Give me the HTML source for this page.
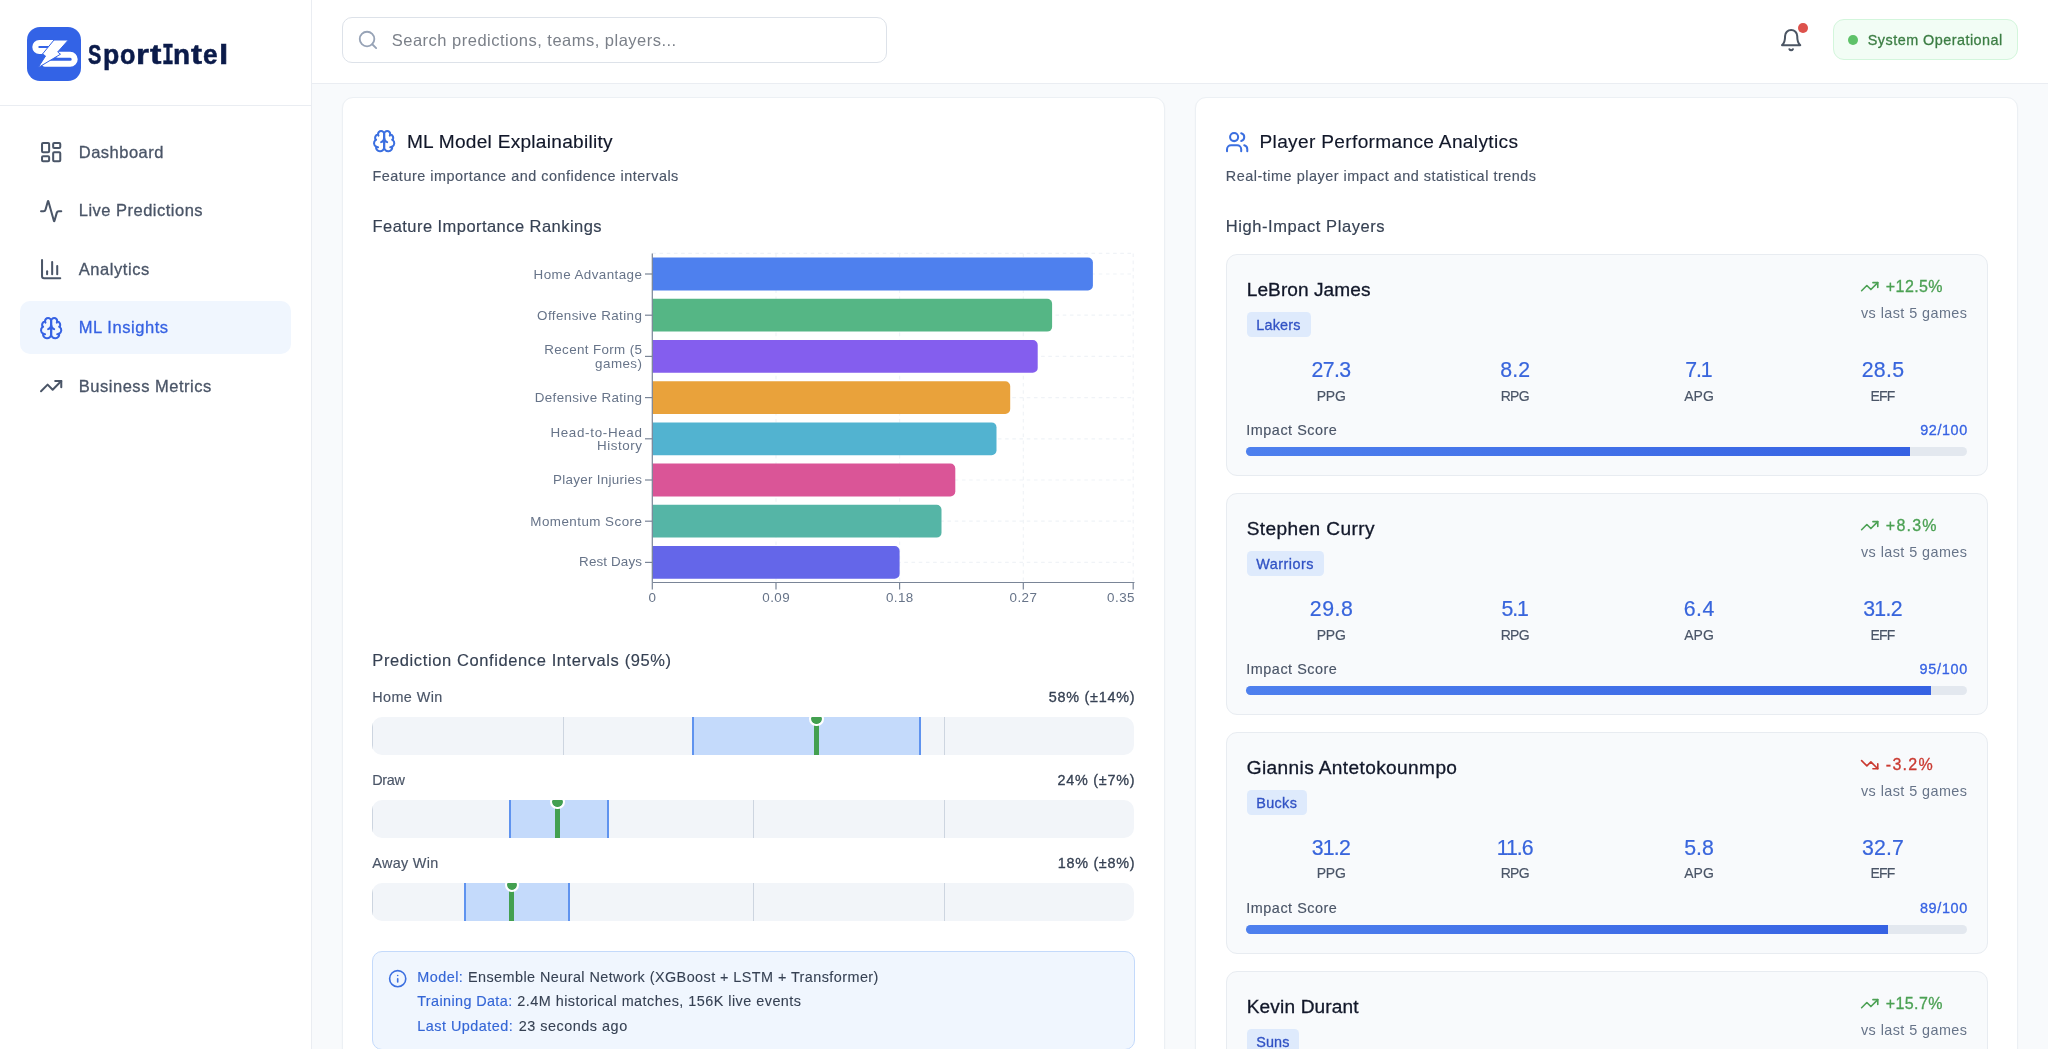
<!DOCTYPE html>
<html lang="en"><head><meta charset="utf-8"><title>SportIntel</title>
<style>
html,body{margin:0;padding:0;}
body{width:2048px;height:1049px;overflow:hidden;position:relative;font-family:"Liberation Sans",sans-serif;background:#f8fafc;}
#root{position:absolute;left:0;top:0;width:2048px;height:1049px;overflow:hidden;will-change:transform;}
.b{position:absolute;}
.t{position:absolute;white-space:nowrap;line-height:1;}
</style></head><body><div id="root">
<div class="b" style="left:0px;top:0px;width:2048px;height:1049px;background:#f8fafc;"></div>
<div class="b" style="left:0px;top:0px;width:311px;height:1049px;background:#fff;border-right:1px solid #eaedf2;"></div>
<div class="b" style="left:0px;top:104.5px;width:311px;height:1px;background:#eaedf2;"></div>
<div class="b" style="left:312px;top:0px;width:1736px;height:83px;background:#fff;border-bottom:1px solid #eaedf2;"></div>
<svg class="b" style="left:26.5px;top:26.5px" width="54" height="54" viewBox="0 0 54 54">
<rect width="54" height="54" rx="13" fill="#3363e6"/>
<path d="M34 16H12.3a4 4 0 0 0 0 8H24" fill="none" stroke="#fff" stroke-width="6" stroke-linecap="butt"/>
<path d="M31 27.7H43.2a4.5 4.5 0 0 1 0 9H18" fill="none" stroke="#fff" stroke-width="6" stroke-linecap="round"/>
<path d="M27 13H41.3L30.7 25l2.8 2.2L11 40.7 18.5 29l-3-2z" fill="#fff" stroke="#3363e6" stroke-width="1" stroke-linejoin="round"/>
</svg>
<div class="t" style="left:88.38px;top:39px;font-size:28px;line-height:31px;font-weight:bold;color:#0b1b4a;-webkit-text-stroke:0.55px #0b1b4a;transform-origin:0 25px;transform:scale(0.7149,1.0000);">S</div>
<div class="t" style="left:103.27px;top:39px;font-size:28px;line-height:31px;font-weight:bold;color:#0b1b4a;-webkit-text-stroke:0.55px #0b1b4a;transform-origin:0 25px;transform:scale(0.9505,1.0000);">p</div>
<div class="t" style="left:120.40px;top:39px;font-size:28px;line-height:31px;font-weight:bold;color:#0b1b4a;-webkit-text-stroke:0.55px #0b1b4a;transform-origin:0 25px;transform:scale(0.9007,1.0000);">o</div>
<div class="t" style="left:136.28px;top:39px;font-size:28px;line-height:31px;font-weight:bold;color:#0b1b4a;-webkit-text-stroke:0.55px #0b1b4a;transform-origin:0 25px;transform:scale(1.1878,1.0000);">r</div>
<div class="t" style="left:150.27px;top:39px;font-size:28px;line-height:31px;font-weight:bold;color:#0b1b4a;-webkit-text-stroke:0.55px #0b1b4a;transform-origin:0 25px;transform:scale(1.2253,1.0000);">t</div>
<div class="t" style="left:161.90px;top:41px;font-size:28px;line-height:31px;font-weight:bold;color:#0b1b4a;-webkit-text-stroke:0.55px #0b1b4a;font-family:'Liberation Mono',monospace;transform-origin:0 23px;transform:scale(0.7103,1.0646);">I</div>
<div class="t" style="left:173.11px;top:39px;font-size:28px;line-height:31px;font-weight:bold;color:#0b1b4a;-webkit-text-stroke:0.55px #0b1b4a;transform-origin:0 25px;transform:scale(0.9956,1.0000);">n</div>
<div class="t" style="left:191.47px;top:39px;font-size:28px;line-height:31px;font-weight:bold;color:#0b1b4a;-webkit-text-stroke:0.55px #0b1b4a;transform-origin:0 25px;transform:scale(1.1789,1.0000);">t</div>
<div class="t" style="left:203.17px;top:39px;font-size:28px;line-height:31px;font-weight:bold;color:#0b1b4a;-webkit-text-stroke:0.55px #0b1b4a;transform-origin:0 25px;transform:scale(0.9371,1.0000);">e</div>
<div class="t" style="left:218.66px;top:39px;font-size:28px;line-height:31px;font-weight:bold;color:#0b1b4a;-webkit-text-stroke:0.55px #0b1b4a;transform-origin:0 25px;transform:scale(1.1948,1.0000);">l</div>
<svg class="b" style="left:39.2px;top:140.04999999999998px;" width="24.3" height="24.3" viewBox="0 0 24 24" fill="none" stroke="#4a5567" stroke-width="2" stroke-linecap="round" stroke-linejoin="round"><rect width="7" height="9" x="3" y="3" rx="1"/><rect width="7" height="5" x="14" y="3" rx="1"/><rect width="7" height="9" x="14" y="12" rx="1"/><rect width="7" height="5" x="3" y="16" rx="1"/></svg>
<div class="t" style="left:78.80px;top:143.00px;font-size:16.5px;color:#4a5567;letter-spacing:0.485px;-webkit-text-stroke:0.3px #4a5567;line-height:18px;">Dashboard</div>
<svg class="b" style="left:39.2px;top:198.54999999999998px;" width="24.3" height="24.3" viewBox="0 0 24 24" fill="none" stroke="#4a5567" stroke-width="2" stroke-linecap="round" stroke-linejoin="round"><path d="M22 12h-2.48a2 2 0 0 0-1.93 1.46l-2.35 8.36a.25.25 0 0 1-.48 0L9.24 2.18a.25.25 0 0 0-.48 0l-2.35 8.36A2 2 0 0 1 4.49 12H2"/></svg>
<div class="t" style="left:78.80px;top:201.00px;font-size:16.5px;color:#4a5567;letter-spacing:0.485px;-webkit-text-stroke:0.3px #4a5567;line-height:18px;">Live Predictions</div>
<svg class="b" style="left:39.2px;top:257.05px;" width="24.3" height="24.3" viewBox="0 0 24 24" fill="none" stroke="#4a5567" stroke-width="2" stroke-linecap="round" stroke-linejoin="round"><path d="M3 3v16a2 2 0 0 0 2 2h16"/><path d="M18 17V9"/><path d="M13 17V5"/><path d="M8 17v-3"/></svg>
<div class="t" style="left:78.80px;top:260.00px;font-size:16.5px;color:#4a5567;letter-spacing:0.559px;-webkit-text-stroke:0.3px #4a5567;line-height:18px;">Analytics</div>
<div class="b" style="left:20px;top:301.45px;width:270.75px;height:52.5px;background:#f0f6fe;border-radius:10px;"></div>
<svg class="b" style="left:39.2px;top:315.55px;" width="24.3" height="24.3" viewBox="0 0 24 24" fill="none" stroke="#3662e3" stroke-width="2" stroke-linecap="round" stroke-linejoin="round"><path d="M12 5a3 3 0 1 0-5.997.125 4 4 0 0 0-2.526 5.77 4 4 0 0 0 .556 6.588A4 4 0 1 0 12 18Z"/><path d="M12 5a3 3 0 1 1 5.997.125 4 4 0 0 1 2.526 5.77 4 4 0 0 1-.556 6.588A4 4 0 1 1 12 18Z"/><path d="M15 13a4.5 4.5 0 0 1-3-4 4.5 4.5 0 0 1-3 4"/><path d="M17.599 6.5a3 3 0 0 0 .399-1.375"/><path d="M6.003 5.125A3 3 0 0 0 6.401 6.5"/><path d="M3.477 10.896a4 4 0 0 1 .585-.396"/><path d="M19.938 10.5a4 4 0 0 1 .585.396"/><path d="M6 18a4 4 0 0 1-1.967-.516"/><path d="M19.967 17.484A4 4 0 0 1 18 18"/></svg>
<div class="t" style="left:78.80px;top:318.00px;font-size:16.5px;color:#3662e3;letter-spacing:0.549px;-webkit-text-stroke:0.3px #3662e3;line-height:18px;">ML Insights</div>
<svg class="b" style="left:39.2px;top:374.05px;" width="24.3" height="24.3" viewBox="0 0 24 24" fill="none" stroke="#4a5567" stroke-width="2" stroke-linecap="round" stroke-linejoin="round"><polyline points="22 7 13.5 15.5 8.5 10.5 2 17"/><polyline points="16 7 22 7 22 13"/></svg>
<div class="t" style="left:78.80px;top:377.00px;font-size:16.5px;color:#4a5567;letter-spacing:0.520px;-webkit-text-stroke:0.3px #4a5567;line-height:18px;">Business Metrics</div>
<div class="b" style="left:342px;top:17px;width:545px;height:46px;background:#fff;border:1px solid #dde2e9;border-radius:10px;box-sizing:border-box;"></div>
<svg class="b" style="left:356.5px;top:28.6px;" width="21.9" height="21.9" viewBox="0 0 24 24" fill="none" stroke="#97a3b6" stroke-width="2" stroke-linecap="round" stroke-linejoin="round"><circle cx="11" cy="11" r="8"/><path d="m21 21-4.3-4.3"/></svg>
<div class="t" style="left:391.80px;top:31.00px;font-size:16.5px;color:#7b8089;letter-spacing:0.487px;line-height:18px;">Search predictions, teams, players...</div>
<svg class="b" style="left:1778.8px;top:27.8px;" width="24.3" height="24.3" viewBox="0 0 24 24" fill="none" stroke="#4b5563" stroke-width="2" stroke-linecap="round" stroke-linejoin="round"><path d="M6 8a6 6 0 0 1 12 0c0 7 3 9 3 9H3s3-2 3-9"/><path d="M10.3 21a1.94 1.94 0 0 0 3.4 0"/></svg>
<div class="b" style="left:1798.2px;top:22.9px;width:9.8px;height:9.8px;background:#dd524c;border-radius:50%;"></div>
<div class="b" style="left:1832.5px;top:19.4px;width:185.7px;height:40.7px;background:#f2fdf5;border:1px solid #d3f6dc;border-radius:11px;box-sizing:border-box;"></div>
<div class="b" style="left:1848.1px;top:35.2px;width:9.8px;height:9.8px;background:#5ec269;border-radius:50%;"></div>
<div class="t" style="left:1867.80px;top:32.00px;font-size:14.4px;color:#3c7e44;letter-spacing:0.473px;-webkit-text-stroke:0.3px #3c7e44;line-height:16px;">System Operational</div>
<div class="b" style="left:342px;top:96.5px;width:823px;height:1000px;background:#fff;border:1px solid #ecf0f4;border-radius:11px;box-sizing:border-box;box-shadow:0 1px 2px rgba(15,23,42,0.03);"></div>
<svg class="b" style="left:371.9px;top:128.9px;" width="24.3" height="24.3" viewBox="0 0 24 24" fill="none" stroke="#3b6fe0" stroke-width="2" stroke-linecap="round" stroke-linejoin="round"><path d="M12 5a3 3 0 1 0-5.997.125 4 4 0 0 0-2.526 5.77 4 4 0 0 0 .556 6.588A4 4 0 1 0 12 18Z"/><path d="M12 5a3 3 0 1 1 5.997.125 4 4 0 0 1 2.526 5.77 4 4 0 0 1-.556 6.588A4 4 0 1 1 12 18Z"/><path d="M15 13a4.5 4.5 0 0 1-3-4 4.5 4.5 0 0 1-3 4"/><path d="M17.599 6.5a3 3 0 0 0 .399-1.375"/><path d="M6.003 5.125A3 3 0 0 0 6.401 6.5"/><path d="M3.477 10.896a4 4 0 0 1 .585-.396"/><path d="M19.938 10.5a4 4 0 0 1 .585.396"/><path d="M6 18a4 4 0 0 1-1.967-.516"/><path d="M19.967 17.484A4 4 0 0 1 18 18"/></svg>
<div class="t" style="left:406.90px;top:131.00px;font-size:19.1px;color:#111729;letter-spacing:0.262px;-webkit-text-stroke:0.15px #111729;line-height:21px;">ML Model Explainability</div>
<div class="t" style="left:372.50px;top:168.00px;font-size:14.4px;color:#4a5567;letter-spacing:0.520px;-webkit-text-stroke:0.15px #4a5567;line-height:16px;">Feature importance and confidence intervals</div>
<div class="t" style="left:372.50px;top:217.00px;font-size:16.5px;color:#364153;letter-spacing:0.448px;-webkit-text-stroke:0.15px #364153;line-height:18px;">Feature Importance Rankings</div>
<svg class="b" style="left:0;top:0" width="2048" height="1049" viewBox="0 0 2048 1049"><line x1="652.3" y1="274.0" x2="1134.5" y2="274.0" stroke="#f0f3f7" stroke-width="1.2" stroke-dasharray="3.6 3.6"/><line x1="652.3" y1="315.2" x2="1134.5" y2="315.2" stroke="#f0f3f7" stroke-width="1.2" stroke-dasharray="3.6 3.6"/><line x1="652.3" y1="356.4" x2="1134.5" y2="356.4" stroke="#f0f3f7" stroke-width="1.2" stroke-dasharray="3.6 3.6"/><line x1="652.3" y1="397.6" x2="1134.5" y2="397.6" stroke="#f0f3f7" stroke-width="1.2" stroke-dasharray="3.6 3.6"/><line x1="652.3" y1="438.8" x2="1134.5" y2="438.8" stroke="#f0f3f7" stroke-width="1.2" stroke-dasharray="3.6 3.6"/><line x1="652.3" y1="480.0" x2="1134.5" y2="480.0" stroke="#f0f3f7" stroke-width="1.2" stroke-dasharray="3.6 3.6"/><line x1="652.3" y1="521.2" x2="1134.5" y2="521.2" stroke="#f0f3f7" stroke-width="1.2" stroke-dasharray="3.6 3.6"/><line x1="652.3" y1="562.4" x2="1134.5" y2="562.4" stroke="#f0f3f7" stroke-width="1.2" stroke-dasharray="3.6 3.6"/><line x1="652.3" y1="253.4" x2="1134.5" y2="253.4" stroke="#f0f3f7" stroke-width="1.2" stroke-dasharray="3.6 3.6"/><line x1="652.3" y1="253.4" x2="652.3" y2="582.5" stroke="#f0f3f7" stroke-width="1.2" stroke-dasharray="3.6 3.6"/><line x1="776.0" y1="253.4" x2="776.0" y2="582.5" stroke="#f0f3f7" stroke-width="1.2" stroke-dasharray="3.6 3.6"/><line x1="899.6" y1="253.4" x2="899.6" y2="582.5" stroke="#f0f3f7" stroke-width="1.2" stroke-dasharray="3.6 3.6"/><line x1="1023.3" y1="253.4" x2="1023.3" y2="582.5" stroke="#f0f3f7" stroke-width="1.2" stroke-dasharray="3.6 3.6"/><line x1="1133.2" y1="253.4" x2="1133.2" y2="582.5" stroke="#f0f3f7" stroke-width="1.2" stroke-dasharray="3.6 3.6"/><path d="M652.3,257.6h435.7a4.9,4.9 0 0 1 4.9,4.9v23.0a4.9,4.9 0 0 1 -4.9,4.9h-435.7z" fill="#4e80ee"/><line x1="645.0" y1="274.0" x2="652.3" y2="274.0" stroke="#7a8597" stroke-width="1.2"/><path d="M652.3,298.8h394.9a4.9,4.9 0 0 1 4.9,4.9v23.0a4.9,4.9 0 0 1 -4.9,4.9h-394.9z" fill="#55b685"/><line x1="645.0" y1="315.2" x2="652.3" y2="315.2" stroke="#7a8597" stroke-width="1.2"/><path d="M652.3,340.0h380.5a4.9,4.9 0 0 1 4.9,4.9v23.0a4.9,4.9 0 0 1 -4.9,4.9h-380.5z" fill="#845eee"/><line x1="645.0" y1="356.4" x2="652.3" y2="356.4" stroke="#7a8597" stroke-width="1.2"/><path d="M652.3,381.2h353.0a4.9,4.9 0 0 1 4.9,4.9v23.0a4.9,4.9 0 0 1 -4.9,4.9h-353.0z" fill="#e9a23b"/><line x1="645.0" y1="397.6" x2="652.3" y2="397.6" stroke="#7a8597" stroke-width="1.2"/><path d="M652.3,422.4h339.3a4.9,4.9 0 0 1 4.9,4.9v23.0a4.9,4.9 0 0 1 -4.9,4.9h-339.3z" fill="#52b3d0"/><line x1="645.0" y1="438.8" x2="652.3" y2="438.8" stroke="#7a8597" stroke-width="1.2"/><path d="M652.3,463.6h298.1a4.9,4.9 0 0 1 4.9,4.9v23.0a4.9,4.9 0 0 1 -4.9,4.9h-298.1z" fill="#da5597"/><line x1="645.0" y1="480.0" x2="652.3" y2="480.0" stroke="#7a8597" stroke-width="1.2"/><path d="M652.3,504.8h284.3a4.9,4.9 0 0 1 4.9,4.9v23.0a4.9,4.9 0 0 1 -4.9,4.9h-284.3z" fill="#55b5a6"/><line x1="645.0" y1="521.2" x2="652.3" y2="521.2" stroke="#7a8597" stroke-width="1.2"/><path d="M652.3,546.0h242.4a4.9,4.9 0 0 1 4.9,4.9v23.0a4.9,4.9 0 0 1 -4.9,4.9h-242.4z" fill="#6466e9"/><line x1="645.0" y1="562.4" x2="652.3" y2="562.4" stroke="#7a8597" stroke-width="1.2"/><line x1="652.3" y1="253.4" x2="652.3" y2="582.5" stroke="#7a8597" stroke-width="1.2"/><line x1="652.3" y1="582.5" x2="1134.5" y2="582.5" stroke="#7a8597" stroke-width="1.2"/><line x1="652.3" y1="582.5" x2="652.3" y2="589.5" stroke="#7a8597" stroke-width="1.2"/><line x1="776.0" y1="582.5" x2="776.0" y2="589.5" stroke="#7a8597" stroke-width="1.2"/><line x1="899.6" y1="582.5" x2="899.6" y2="589.5" stroke="#7a8597" stroke-width="1.2"/><line x1="1023.3" y1="582.5" x2="1023.3" y2="589.5" stroke="#7a8597" stroke-width="1.2"/><line x1="1133.2" y1="582.5" x2="1133.2" y2="589.5" stroke="#7a8597" stroke-width="1.2"/></svg>
<div class="t" style="left:533.60px;top:267.00px;font-size:13.4px;color:#677489;letter-spacing:0.430px;line-height:15px;">Home Advantage</div>
<div class="t" style="left:537.10px;top:308.00px;font-size:13.4px;color:#677489;letter-spacing:0.405px;line-height:15px;">Offensive Rating</div>
<div class="t" style="left:544.30px;top:342.00px;font-size:13.4px;color:#677489;letter-spacing:0.355px;line-height:15px;">Recent Form (5</div>
<div class="t" style="left:595.10px;top:356.00px;font-size:13.4px;color:#677489;letter-spacing:0.444px;line-height:15px;">games)</div>
<div class="t" style="left:534.80px;top:390.00px;font-size:13.4px;color:#677489;letter-spacing:0.344px;line-height:15px;">Defensive Rating</div>
<div class="t" style="left:550.40px;top:425.00px;font-size:13.4px;color:#677489;letter-spacing:0.676px;line-height:15px;">Head-to-Head</div>
<div class="t" style="left:597.10px;top:438.00px;font-size:13.4px;color:#677489;letter-spacing:0.535px;line-height:15px;">History</div>
<div class="t" style="left:553.10px;top:472.00px;font-size:13.4px;color:#677489;letter-spacing:0.286px;line-height:15px;">Player Injuries</div>
<div class="t" style="left:530.30px;top:514.00px;font-size:13.4px;color:#677489;letter-spacing:0.458px;line-height:15px;">Momentum Score</div>
<div class="t" style="left:579.10px;top:554.00px;font-size:13.4px;color:#677489;letter-spacing:0.137px;line-height:15px;">Rest Days</div>
<div class="t" style="left:648.57px;top:590.00px;font-size:13.4px;color:#677489;letter-spacing:0.450px;line-height:15px;">0</div>
<div class="t" style="left:762.24px;top:590.00px;font-size:13.4px;color:#677489;letter-spacing:0.450px;line-height:15px;">0.09</div>
<div class="t" style="left:885.90px;top:590.00px;font-size:13.4px;color:#677489;letter-spacing:0.450px;line-height:15px;">0.18</div>
<div class="t" style="left:1009.56px;top:590.00px;font-size:13.4px;color:#677489;letter-spacing:0.450px;line-height:15px;">0.27</div>
<div class="t" style="left:1107.07px;top:590.00px;font-size:13.4px;color:#677489;letter-spacing:0.450px;line-height:15px;">0.35</div>
<div class="t" style="left:372.30px;top:651.00px;font-size:16.5px;color:#364153;letter-spacing:0.606px;-webkit-text-stroke:0.15px #364153;line-height:18px;">Prediction Confidence Intervals (95%)</div>
<div class="t" style="left:372.30px;top:689.00px;font-size:14.4px;color:#4a5567;letter-spacing:0.398px;-webkit-text-stroke:0.15px #4a5567;line-height:16px;">Home Win</div>
<div class="t" style="left:1048.80px;top:689.00px;font-size:14.4px;color:#364153;letter-spacing:0.729px;-webkit-text-stroke:0.3px #364153;line-height:16px;">58% (±14%)</div>
<div class="b" style="left:372.3px;top:716.5px;width:762.0px;height:38.8px;background:#f2f5f9;border-radius:10px;overflow:hidden;">
<div class="b" style="left:0%;top:0;width:1.2px;height:100%;background:#cdd5e0;"></div>
<div class="b" style="left:25%;top:0;width:1.2px;height:100%;background:#cdd5e0;"></div>
<div class="b" style="left:50%;top:0;width:1.2px;height:100%;background:#cdd5e0;"></div>
<div class="b" style="left:75%;top:0;width:1.2px;height:100%;background:#cdd5e0;"></div>
<div class="b" style="left:42%;top:0;width:30%;height:100%;background:#c4dafb;border-left:2.4px solid #5f93ef;border-right:2.4px solid #5f93ef;box-sizing:border-box;"></div>
<div class="b" style="left:58%;top:0;width:4.86px;height:100%;background:#43a050;"></div>
<div class="b" style="left:calc(58% - 4.86px);top:-4.86px;width:14.6px;height:14.6px;background:#43a050;background-clip:padding-box;border:2.4px solid #fff;border-radius:50%;box-sizing:border-box;"></div>
</div>
<div class="t" style="left:372.30px;top:772.00px;font-size:14.4px;color:#4a5567;letter-spacing:-0.368px;-webkit-text-stroke:0.15px #4a5567;line-height:16px;">Draw</div>
<div class="t" style="left:1057.50px;top:772.00px;font-size:14.4px;color:#364153;letter-spacing:0.734px;-webkit-text-stroke:0.3px #364153;line-height:16px;">24% (±7%)</div>
<div class="b" style="left:372.3px;top:799.5px;width:762.0px;height:38.8px;background:#f2f5f9;border-radius:10px;overflow:hidden;">
<div class="b" style="left:0%;top:0;width:1.2px;height:100%;background:#cdd5e0;"></div>
<div class="b" style="left:25%;top:0;width:1.2px;height:100%;background:#cdd5e0;"></div>
<div class="b" style="left:50%;top:0;width:1.2px;height:100%;background:#cdd5e0;"></div>
<div class="b" style="left:75%;top:0;width:1.2px;height:100%;background:#cdd5e0;"></div>
<div class="b" style="left:18%;top:0;width:13%;height:100%;background:#c4dafb;border-left:2.4px solid #5f93ef;border-right:2.4px solid #5f93ef;box-sizing:border-box;"></div>
<div class="b" style="left:24%;top:0;width:4.86px;height:100%;background:#43a050;"></div>
<div class="b" style="left:calc(24% - 4.86px);top:-4.86px;width:14.6px;height:14.6px;background:#43a050;background-clip:padding-box;border:2.4px solid #fff;border-radius:50%;box-sizing:border-box;"></div>
</div>
<div class="t" style="left:372.30px;top:855.00px;font-size:14.4px;color:#4a5567;letter-spacing:0.321px;-webkit-text-stroke:0.15px #4a5567;line-height:16px;">Away Win</div>
<div class="t" style="left:1057.80px;top:855.00px;font-size:14.4px;color:#364153;letter-spacing:0.696px;-webkit-text-stroke:0.3px #364153;line-height:16px;">18% (±8%)</div>
<div class="b" style="left:372.3px;top:882.5px;width:762.0px;height:38.8px;background:#f2f5f9;border-radius:10px;overflow:hidden;">
<div class="b" style="left:0%;top:0;width:1.2px;height:100%;background:#cdd5e0;"></div>
<div class="b" style="left:25%;top:0;width:1.2px;height:100%;background:#cdd5e0;"></div>
<div class="b" style="left:50%;top:0;width:1.2px;height:100%;background:#cdd5e0;"></div>
<div class="b" style="left:75%;top:0;width:1.2px;height:100%;background:#cdd5e0;"></div>
<div class="b" style="left:12%;top:0;width:14%;height:100%;background:#c4dafb;border-left:2.4px solid #5f93ef;border-right:2.4px solid #5f93ef;box-sizing:border-box;"></div>
<div class="b" style="left:18%;top:0;width:4.86px;height:100%;background:#43a050;"></div>
<div class="b" style="left:calc(18% - 4.86px);top:-4.86px;width:14.6px;height:14.6px;background:#43a050;background-clip:padding-box;border:2.4px solid #fff;border-radius:50%;box-sizing:border-box;"></div>
</div>
<div class="b" style="left:372px;top:950.5px;width:763px;height:99.6px;background:#f0f6fe;border:1px solid #c4dafb;border-radius:10px;box-sizing:border-box;"></div>
<svg class="b" style="left:387.7px;top:968.6px;" width="19.4" height="19.4" viewBox="0 0 24 24" fill="none" stroke="#3b6fe0" stroke-width="2" stroke-linecap="round" stroke-linejoin="round"><circle cx="12" cy="12" r="10"/><path d="M12 16v-4"/><path d="M12 8h.01"/></svg>
<div class="t" style="left:417.20px;top:969.00px;font-size:14.4px;color:#3466d6;letter-spacing:0.496px;-webkit-text-stroke:0.15px #3466d6;line-height:16px;">Model:</div>
<div class="t" style="left:468.00px;top:969.00px;font-size:14.4px;color:#364153;letter-spacing:0.439px;-webkit-text-stroke:0.1px #364153;line-height:16px;">Ensemble Neural Network (XGBoost + LSTM + Transformer)</div>
<div class="t" style="left:417.20px;top:993.00px;font-size:14.4px;color:#3466d6;letter-spacing:0.392px;-webkit-text-stroke:0.15px #3466d6;line-height:16px;">Training Data:</div>
<div class="t" style="left:517.30px;top:993.00px;font-size:14.4px;color:#364153;letter-spacing:0.474px;-webkit-text-stroke:0.1px #364153;line-height:16px;">2.4M historical matches, 156K live events</div>
<div class="t" style="left:417.20px;top:1018.00px;font-size:14.4px;color:#3466d6;letter-spacing:0.503px;-webkit-text-stroke:0.15px #3466d6;line-height:16px;">Last Updated:</div>
<div class="t" style="left:518.80px;top:1018.00px;font-size:14.4px;color:#364153;letter-spacing:0.517px;-webkit-text-stroke:0.1px #364153;line-height:16px;">23 seconds ago</div>
<div class="b" style="left:1195px;top:96.5px;width:823px;height:1000px;background:#fff;border:1px solid #ecf0f4;border-radius:11px;box-sizing:border-box;box-shadow:0 1px 2px rgba(15,23,42,0.03);"></div>
<svg class="b" style="left:1225.2px;top:129.5px;" width="24.3" height="24.3" viewBox="0 0 24 24" fill="none" stroke="#3b6fe0" stroke-width="2" stroke-linecap="round" stroke-linejoin="round"><path d="M16 21v-2a4 4 0 0 0-4-4H6a4 4 0 0 0-4 4v2"/><circle cx="9" cy="7" r="4"/><path d="M22 21v-2a4 4 0 0 0-3-3.87"/><path d="M16 3.13a4 4 0 0 1 0 7.75"/></svg>
<div class="t" style="left:1259.50px;top:131.00px;font-size:19.1px;color:#111729;letter-spacing:0.335px;-webkit-text-stroke:0.15px #111729;line-height:21px;">Player Performance Analytics</div>
<div class="t" style="left:1225.75px;top:168.00px;font-size:14.4px;color:#4a5567;letter-spacing:0.533px;-webkit-text-stroke:0.15px #4a5567;line-height:16px;">Real-time player impact and statistical trends</div>
<div class="t" style="left:1225.75px;top:217.00px;font-size:16.5px;color:#364153;letter-spacing:0.567px;-webkit-text-stroke:0.15px #364153;line-height:18px;">High-Impact Players</div>
<div class="b" style="left:1226px;top:253.8px;width:761.5px;height:222.5px;background:#f8fafc;border:1px solid #e8ecf1;border-radius:11px;box-sizing:border-box;"></div>
<div class="t" style="left:1246.75px;top:279.00px;font-size:19.1px;color:#111729;letter-spacing:0.054px;-webkit-text-stroke:0.3px #111729;line-height:21px;">LeBron James</div>
<div class="b" style="left:1246.8px;top:311.9px;width:63.85px;height:25.3px;background:#deeafc;border-radius:4.5px;"></div>
<div class="t" style="left:1256.25px;top:317.00px;font-size:14.4px;color:#3152c4;letter-spacing:0.206px;-webkit-text-stroke:0.3px #3152c4;line-height:16px;">Lakers</div>
<svg class="b" style="left:1860.2px;top:276.9px;" width="19.4" height="19.4" viewBox="0 0 24 24" fill="none" stroke="#4ca154" stroke-width="2" stroke-linecap="round" stroke-linejoin="round"><polyline points="22 7 13.5 15.5 8.5 10.5 2 17"/><polyline points="16 7 22 7 22 13"/></svg>
<div class="t" style="left:1885.80px;top:278.00px;font-size:16px;color:#4ca154;letter-spacing:0.418px;-webkit-text-stroke:0.3px #4ca154;line-height:17px;">+12.5%</div>
<div class="t" style="left:1861.00px;top:305.00px;font-size:14.4px;color:#677489;letter-spacing:0.426px;line-height:16px;">vs last 5 games</div>
<div class="t" style="left:1311.40px;top:358.00px;font-size:21.3px;color:#3865dc;letter-spacing:-0.552px;-webkit-text-stroke:0.2px #3865dc;line-height:24px;">27.3</div>
<div class="t" style="left:1316.80px;top:388.00px;font-size:14px;color:#4a5567;letter-spacing:-0.283px;-webkit-text-stroke:0.15px #4a5567;line-height:16px;">PPG</div>
<div class="t" style="left:1500.30px;top:358.00px;font-size:21.3px;color:#3865dc;letter-spacing:0.045px;-webkit-text-stroke:0.2px #3865dc;line-height:24px;">8.2</div>
<div class="t" style="left:1500.65px;top:388.00px;font-size:14px;color:#4a5567;letter-spacing:-0.669px;-webkit-text-stroke:0.15px #4a5567;line-height:16px;">RPG</div>
<div class="t" style="left:1685.30px;top:358.00px;font-size:21.3px;color:#3865dc;letter-spacing:-1.100px;-webkit-text-stroke:0.2px #3865dc;line-height:24px;">7.1</div>
<div class="t" style="left:1684.20px;top:388.00px;font-size:14px;color:#4a5567;letter-spacing:0.017px;-webkit-text-stroke:0.15px #4a5567;line-height:16px;">APG</div>
<div class="t" style="left:1861.65px;top:358.00px;font-size:21.3px;color:#3865dc;letter-spacing:0.315px;-webkit-text-stroke:0.2px #3865dc;line-height:24px;">28.5</div>
<div class="t" style="left:1870.45px;top:388.00px;font-size:14px;color:#4a5567;letter-spacing:-0.821px;-webkit-text-stroke:0.15px #4a5567;line-height:16px;">EFF</div>
<div class="t" style="left:1246.30px;top:422.00px;font-size:14.4px;color:#4a5567;letter-spacing:0.524px;-webkit-text-stroke:0.15px #4a5567;line-height:16px;">Impact Score</div>
<div class="t" style="left:1920.25px;top:422.00px;font-size:14.4px;color:#3662e3;letter-spacing:0.591px;-webkit-text-stroke:0.3px #3662e3;line-height:16px;">92/100</div>
<div class="b" style="left:1246.1px;top:446.7px;width:721.2px;height:9.7px;background:#e3e8ef;border-radius:5px;"></div>
<div class="b" style="left:1246.1px;top:446.7px;width:663.5040000000001px;height:9.7px;background:linear-gradient(90deg,#4e80ee,#3662e3);border-radius:5px 0 0 5px;"></div>
<div class="b" style="left:1226px;top:492.75px;width:761.5px;height:222.5px;background:#f8fafc;border:1px solid #e8ecf1;border-radius:11px;box-sizing:border-box;"></div>
<div class="t" style="left:1246.75px;top:518.00px;font-size:19.1px;color:#111729;letter-spacing:0.387px;-webkit-text-stroke:0.3px #111729;line-height:21px;">Stephen Curry</div>
<div class="b" style="left:1246.8px;top:550.8499999999999px;width:76.80000000000001px;height:25.3px;background:#deeafc;border-radius:4.5px;"></div>
<div class="t" style="left:1256.25px;top:556.00px;font-size:14.4px;color:#3152c4;letter-spacing:0.477px;-webkit-text-stroke:0.3px #3152c4;line-height:16px;">Warriors</div>
<svg class="b" style="left:1860.2px;top:515.8499999999999px;" width="19.4" height="19.4" viewBox="0 0 24 24" fill="none" stroke="#4ca154" stroke-width="2" stroke-linecap="round" stroke-linejoin="round"><polyline points="22 7 13.5 15.5 8.5 10.5 2 17"/><polyline points="16 7 22 7 22 13"/></svg>
<div class="t" style="left:1885.80px;top:517.00px;font-size:16px;color:#4ca154;letter-spacing:1.247px;-webkit-text-stroke:0.3px #4ca154;line-height:17px;">+8.3%</div>
<div class="t" style="left:1861.00px;top:544.00px;font-size:14.4px;color:#677489;letter-spacing:0.426px;line-height:16px;">vs last 5 games</div>
<div class="t" style="left:1309.85px;top:597.00px;font-size:21.3px;color:#3865dc;letter-spacing:0.481px;-webkit-text-stroke:0.2px #3865dc;line-height:24px;">29.8</div>
<div class="t" style="left:1316.80px;top:627.00px;font-size:14px;color:#4a5567;letter-spacing:-0.283px;-webkit-text-stroke:0.15px #4a5567;line-height:16px;">PPG</div>
<div class="t" style="left:1501.45px;top:597.00px;font-size:21.3px;color:#3865dc;letter-spacing:-1.100px;-webkit-text-stroke:0.2px #3865dc;line-height:24px;">5.1</div>
<div class="t" style="left:1500.65px;top:627.00px;font-size:14px;color:#4a5567;letter-spacing:-0.669px;-webkit-text-stroke:0.15px #4a5567;line-height:16px;">RPG</div>
<div class="t" style="left:1683.75px;top:597.00px;font-size:21.3px;color:#3865dc;letter-spacing:0.445px;-webkit-text-stroke:0.2px #3865dc;line-height:24px;">6.4</div>
<div class="t" style="left:1684.20px;top:627.00px;font-size:14px;color:#4a5567;letter-spacing:0.017px;-webkit-text-stroke:0.15px #4a5567;line-height:16px;">APG</div>
<div class="t" style="left:1863.15px;top:597.00px;font-size:21.3px;color:#3865dc;letter-spacing:-0.685px;-webkit-text-stroke:0.2px #3865dc;line-height:24px;">31.2</div>
<div class="t" style="left:1870.45px;top:627.00px;font-size:14px;color:#4a5567;letter-spacing:-0.821px;-webkit-text-stroke:0.15px #4a5567;line-height:16px;">EFF</div>
<div class="t" style="left:1246.30px;top:661.00px;font-size:14.4px;color:#4a5567;letter-spacing:0.524px;-webkit-text-stroke:0.15px #4a5567;line-height:16px;">Impact Score</div>
<div class="t" style="left:1919.45px;top:661.00px;font-size:14.4px;color:#3662e3;letter-spacing:0.751px;-webkit-text-stroke:0.3px #3662e3;line-height:16px;">95/100</div>
<div class="b" style="left:1246.1px;top:685.65px;width:721.2px;height:9.7px;background:#e3e8ef;border-radius:5px;"></div>
<div class="b" style="left:1246.1px;top:685.65px;width:685.14px;height:9.7px;background:linear-gradient(90deg,#4e80ee,#3662e3);border-radius:5px 0 0 5px;"></div>
<div class="b" style="left:1226px;top:731.7px;width:761.5px;height:222.5px;background:#f8fafc;border:1px solid #e8ecf1;border-radius:11px;box-sizing:border-box;"></div>
<div class="t" style="left:1246.75px;top:757.00px;font-size:19.1px;color:#111729;letter-spacing:0.375px;-webkit-text-stroke:0.3px #111729;line-height:21px;">Giannis Antetokounmpo</div>
<div class="b" style="left:1246.8px;top:789.8px;width:60.2px;height:25.3px;background:#deeafc;border-radius:4.5px;"></div>
<div class="t" style="left:1256.25px;top:795.00px;font-size:14.4px;color:#3152c4;letter-spacing:0.347px;-webkit-text-stroke:0.3px #3152c4;line-height:16px;">Bucks</div>
<svg class="b" style="left:1860.2px;top:754.8px;" width="19.4" height="19.4" viewBox="0 0 24 24" fill="none" stroke="#ca3a31" stroke-width="2" stroke-linecap="round" stroke-linejoin="round"><polyline points="22 17 13.5 8.5 8.5 13.5 2 7"/><polyline points="16 17 22 17 22 11"/></svg>
<div class="t" style="left:1885.80px;top:756.00px;font-size:16px;color:#ca3a31;letter-spacing:1.276px;-webkit-text-stroke:0.3px #ca3a31;line-height:17px;">-3.2%</div>
<div class="t" style="left:1861.00px;top:783.00px;font-size:14.4px;color:#677489;letter-spacing:0.426px;line-height:16px;">vs last 5 games</div>
<div class="t" style="left:1311.70px;top:836.00px;font-size:21.3px;color:#3865dc;letter-spacing:-0.752px;-webkit-text-stroke:0.2px #3865dc;line-height:24px;">31.2</div>
<div class="t" style="left:1316.80px;top:865.00px;font-size:14px;color:#4a5567;letter-spacing:-0.283px;-webkit-text-stroke:0.15px #4a5567;line-height:16px;">PPG</div>
<div class="t" style="left:1496.70px;top:836.00px;font-size:21.3px;color:#3865dc;letter-spacing:-0.992px;-webkit-text-stroke:0.2px #3865dc;line-height:24px;">11.6</div>
<div class="t" style="left:1500.65px;top:865.00px;font-size:14px;color:#4a5567;letter-spacing:-0.669px;-webkit-text-stroke:0.15px #4a5567;line-height:16px;">RPG</div>
<div class="t" style="left:1684.15px;top:836.00px;font-size:21.3px;color:#3865dc;letter-spacing:0.045px;-webkit-text-stroke:0.2px #3865dc;line-height:24px;">5.8</div>
<div class="t" style="left:1684.20px;top:865.00px;font-size:14px;color:#4a5567;letter-spacing:0.017px;-webkit-text-stroke:0.15px #4a5567;line-height:16px;">APG</div>
<div class="t" style="left:1861.90px;top:836.00px;font-size:21.3px;color:#3865dc;letter-spacing:0.148px;-webkit-text-stroke:0.2px #3865dc;line-height:24px;">32.7</div>
<div class="t" style="left:1870.45px;top:865.00px;font-size:14px;color:#4a5567;letter-spacing:-0.821px;-webkit-text-stroke:0.15px #4a5567;line-height:16px;">EFF</div>
<div class="t" style="left:1246.30px;top:900.00px;font-size:14.4px;color:#4a5567;letter-spacing:0.524px;-webkit-text-stroke:0.15px #4a5567;line-height:16px;">Impact Score</div>
<div class="t" style="left:1919.95px;top:900.00px;font-size:14.4px;color:#3662e3;letter-spacing:0.651px;-webkit-text-stroke:0.3px #3662e3;line-height:16px;">89/100</div>
<div class="b" style="left:1246.1px;top:924.5999999999999px;width:721.2px;height:9.7px;background:#e3e8ef;border-radius:5px;"></div>
<div class="b" style="left:1246.1px;top:924.5999999999999px;width:641.868px;height:9.7px;background:linear-gradient(90deg,#4e80ee,#3662e3);border-radius:5px 0 0 5px;"></div>
<div class="b" style="left:1226px;top:970.6499999999999px;width:761.5px;height:222.5px;background:#f8fafc;border:1px solid #e8ecf1;border-radius:11px;box-sizing:border-box;"></div>
<div class="t" style="left:1246.75px;top:996.00px;font-size:19.1px;color:#111729;letter-spacing:0.135px;-webkit-text-stroke:0.3px #111729;line-height:21px;">Kevin Durant</div>
<div class="b" style="left:1246.8px;top:1028.75px;width:52.7px;height:25.3px;background:#deeafc;border-radius:4.5px;"></div>
<div class="t" style="left:1256.25px;top:1034.00px;font-size:14.4px;color:#3152c4;letter-spacing:0.093px;-webkit-text-stroke:0.3px #3152c4;line-height:16px;">Suns</div>
<svg class="b" style="left:1860.2px;top:993.7499999999999px;" width="19.4" height="19.4" viewBox="0 0 24 24" fill="none" stroke="#4ca154" stroke-width="2" stroke-linecap="round" stroke-linejoin="round"><polyline points="22 7 13.5 15.5 8.5 10.5 2 17"/><polyline points="16 7 22 7 22 13"/></svg>
<div class="t" style="left:1885.80px;top:995.00px;font-size:16px;color:#4ca154;letter-spacing:0.378px;-webkit-text-stroke:0.3px #4ca154;line-height:17px;">+15.7%</div>
<div class="t" style="left:1861.00px;top:1022.00px;font-size:14.4px;color:#677489;letter-spacing:0.426px;line-height:16px;">vs last 5 games</div>
<div class="t" style="left:1311.80px;top:1075.00px;font-size:21.3px;color:#3865dc;letter-spacing:-0.819px;-webkit-text-stroke:0.2px #3865dc;line-height:24px;">30.1</div>
<div class="t" style="left:1316.80px;top:1104.00px;font-size:14px;color:#4a5567;letter-spacing:-0.283px;-webkit-text-stroke:0.15px #4a5567;line-height:16px;">PPG</div>
<div class="t" style="left:1500.15px;top:1075.00px;font-size:21.3px;color:#3865dc;letter-spacing:0.195px;-webkit-text-stroke:0.2px #3865dc;line-height:24px;">6.8</div>
<div class="t" style="left:1500.65px;top:1104.00px;font-size:14px;color:#4a5567;letter-spacing:-0.669px;-webkit-text-stroke:0.15px #4a5567;line-height:16px;">RPG</div>
<div class="t" style="left:1684.00px;top:1075.00px;font-size:21.3px;color:#3865dc;letter-spacing:0.195px;-webkit-text-stroke:0.2px #3865dc;line-height:24px;">5.2</div>
<div class="t" style="left:1684.20px;top:1104.00px;font-size:14px;color:#4a5567;letter-spacing:0.017px;-webkit-text-stroke:0.15px #4a5567;line-height:16px;">APG</div>
<div class="t" style="left:1861.85px;top:1075.00px;font-size:21.3px;color:#3865dc;letter-spacing:0.181px;-webkit-text-stroke:0.2px #3865dc;line-height:24px;">30.4</div>
<div class="t" style="left:1870.45px;top:1104.00px;font-size:14px;color:#4a5567;letter-spacing:-0.821px;-webkit-text-stroke:0.15px #4a5567;line-height:16px;">EFF</div>
<div class="t" style="left:1246.30px;top:1139.00px;font-size:14.4px;color:#4a5567;letter-spacing:0.524px;-webkit-text-stroke:0.15px #4a5567;line-height:16px;">Impact Score</div>
<div class="t" style="left:1922.25px;top:1139.00px;font-size:14.4px;color:#3662e3;letter-spacing:0.191px;-webkit-text-stroke:0.3px #3662e3;line-height:16px;">91/100</div>
<div class="b" style="left:1246.1px;top:1163.55px;width:721.2px;height:9.7px;background:#e3e8ef;border-radius:5px;"></div>
<div class="b" style="left:1246.1px;top:1163.55px;width:656.2919999999999px;height:9.7px;background:linear-gradient(90deg,#4e80ee,#3662e3);border-radius:5px 0 0 5px;"></div>
</div></body></html>
